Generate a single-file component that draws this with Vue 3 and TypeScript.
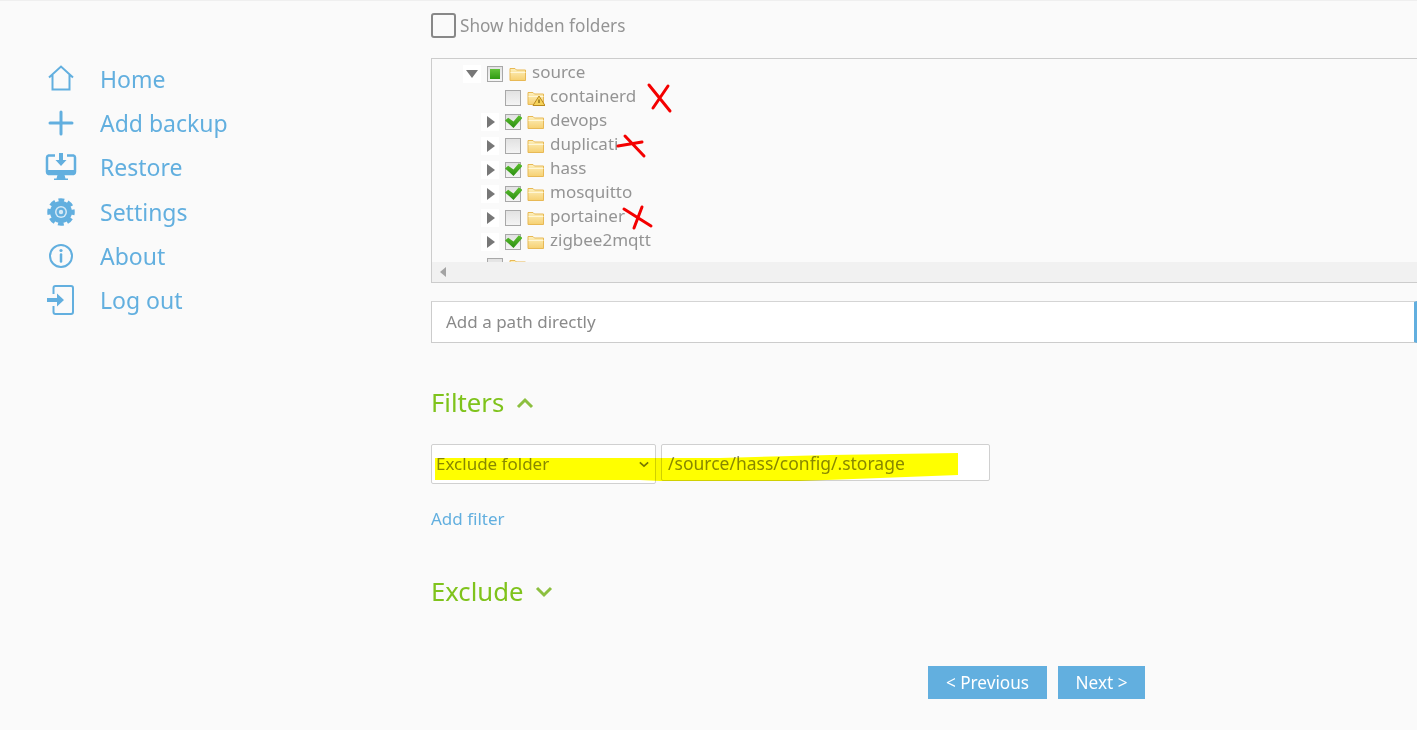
<script setup lang="ts">
interface TreeRow {
  name: string;
  level: 0 | 1;
  state: 'none' | 'checked' | 'partial';
  toggle: 'open' | 'closed' | 'leaf';
  warn?: boolean;
}

const rows: TreeRow[] = [
  { name: 'source', level: 0, state: 'partial', toggle: 'open' },
  { name: 'containerd', level: 1, state: 'none', toggle: 'leaf', warn: true },
  { name: 'devops', level: 1, state: 'checked', toggle: 'closed' },
  { name: 'duplicati', level: 1, state: 'none', toggle: 'closed' },
  { name: 'hass', level: 1, state: 'checked', toggle: 'closed' },
  { name: 'mosquitto', level: 1, state: 'checked', toggle: 'closed' },
  { name: 'portainer', level: 1, state: 'none', toggle: 'closed' },
  { name: 'zigbee2mqtt', level: 1, state: 'checked', toggle: 'closed' },
  { name: '', level: 0, state: 'none', toggle: 'leaf' },
];
</script>

<template>
  <div class="page">
    <svg width="0" height="0" class="defs">
      <defs>
        <linearGradient id="folderFill" x1="0" y1="0" x2="0" y2="1">
          <stop offset="0" stop-color="#fdf0bd" />
          <stop offset="1" stop-color="#f6d071" />
        </linearGradient>
        <linearGradient id="tickFill" x1="0" y1="0" x2="0" y2="1">
          <stop offset="0" stop-color="#5cc02e" />
          <stop offset="1" stop-color="#2c8f12" />
        </linearGradient>
      </defs>
    </svg>

    <nav class="sidebar">
      <a class="nav-item">
        <svg viewBox="0 0 32 32" class="nav-icon">
          <path d="M4 14.5 16 3.5l12 11M7.5 12v14.5h17V12" fill="none" stroke="currentColor" stroke-width="2" />
        </svg>
        Home
      </a>
      <a class="nav-item">
        <svg viewBox="0 0 32 32" class="nav-icon">
          <path d="M16 5v22M5 16h22" fill="none" stroke="currentColor" stroke-width="3" stroke-linecap="round" />
        </svg>
        Add backup
      </a>
      <a class="nav-item">
        <svg viewBox="0 0 32 32" class="nav-icon">
          <path d="M10 4.5H3.5a2 2 0 0 0-1.5 2V21a2 2 0 0 0 1.5 2h25a2 2 0 0 0 1.5-2V6.500a2 2 0 0 0-1.500-2H22" fill="none" stroke="currentColor" stroke-width="2.500" />
          <path d="M2 19h28v3a2 2 0 0 1-2 2H4a2 2 0 0 1-2-2zM12.500 24h7l1 3.500h2.500V29H9v-1.500h2.500zM14 2h4v7h3.500L16 15l-5.500-6H14z" fill="currentColor" />
        </svg>
        Restore
      </a>
      <a class="nav-item">
        <svg viewBox="0 0 32 32" class="nav-icon">
          <circle cx="16" cy="16" r="12" fill="none" stroke="currentColor" stroke-width="3.500" stroke-dasharray="5.800 3.625" stroke-dashoffset="2.900" />
          <circle cx="16" cy="16" r="11" fill="currentColor" />
          <circle cx="16" cy="16" r="6" fill="#d5e9f6" />
          <circle cx="16" cy="16" r="4.500" fill="currentColor" />
          <circle cx="16" cy="16" r="2.200" fill="#d5e9f6" />
        </svg>
        Settings
      </a>
      <a class="nav-item">
        <svg viewBox="0 0 32 32" class="nav-icon">
          <circle cx="16" cy="16" r="11" fill="none" stroke="currentColor" stroke-width="2" />
          <path d="M16 14.500v7" fill="none" stroke="currentColor" stroke-width="2.500" stroke-linecap="round" />
          <circle cx="16" cy="10.500" r="1.600" fill="currentColor" />
        </svg>
        About
      </a>
      <a class="nav-item">
        <svg viewBox="0 0 32 32" class="nav-icon">
          <path d="M8.500 10V4a2 2 0 0 1 2-2H26a2 2 0 0 1 2 2v24a2 2 0 0 1-2 2H10.500a2 2 0 0 1-2-2v-6" fill="none" stroke="currentColor" stroke-width="2" />
          <path d="M2 14h10V9.500l7 6.500-7 6.500V18H2z" fill="currentColor" />
        </svg>
        Log out
      </a>
    </nav>

    <main class="content">
      <label class="hidden-toggle">
        <span class="big-check"></span>
        Show hidden folders
      </label>

      <div class="tree">
        <div class="tree-rows">
          <div v-for="(row, i) in rows" :key="i" class="tree-row" :class="'level-' + row.level">
            <span class="toggle" :class="{ leaf: row.toggle === 'leaf' }">
              <svg v-if="row.toggle === 'open'" viewBox="0 0 12 12" width="12" height="12">
                <path d="M0 2h12L6 10z" fill="#777" />
              </svg>
              <svg v-else-if="row.toggle === 'closed'" viewBox="0 0 12 12" width="12" height="12">
                <path d="M3 0v12l8-6z" fill="#777" />
              </svg>
            </span>
            <span class="check">
              <svg v-if="row.state === 'checked'" viewBox="0 0 16 16" width="17" height="17" class="tick">
                <path d="M0 7 3 4.500 8 8 13 2 16.500 4.500 8 14z" fill="url(#tickFill)" />
              </svg>
              <span v-if="row.state === 'partial'" class="partial"></span>
            </span>
            <span class="folder">
              <svg viewBox="0 0 18 16" width="18" height="16">
                <path d="M1 2.500h5l1.500 1.500H16.500V14.500H1z" fill="url(#folderFill)" stroke="#e8b955" />
                <path d="M1.500 6.500h15" stroke="#fff6d6" />
                <path v-if="row.warn" d="M12 6 18 15.500H6z" fill="#f6d35a" stroke="#b98a20" />
                <path v-if="row.warn" d="M12 9.500v3.500" stroke="#8c6a14" stroke-width="1.400" />
              </svg>
            </span>
            <span class="tree-label">{{ row.name }}</span>
          </div>
        </div>
        <div class="scrollbar">
          <svg viewBox="0 0 6 10" width="6" height="10"><path d="M6 0v10L0 5z" fill="#a3a3a3" /></svg>
        </div>
      </div>

      <div class="path-row">
        <input class="path-input" placeholder="Add a path directly" />
      </div>

      <h2 class="section-title filters-title">
        Filters
        <svg viewBox="0 0 18 12" width="18" height="12" class="chevron">
          <path d="M2 10 9 3l7 7" fill="none" stroke="#8cbf3f" stroke-width="3" />
        </svg>
      </h2>

      <div class="filter-row">
        <div class="select-wrap">
          <select class="filter-select">
            <option>Exclude folder</option>
          </select>
          <svg viewBox="0 0 12 8" width="10" height="7" class="select-arrow">
            <path d="M1 1.500 6 6l5-4.500" fill="none" stroke="#777" stroke-width="2" />
          </svg>
        </div>
        <input class="filter-input" value="/source/hass/config/.storage" />
      </div>

      <a class="add-filter">Add filter</a>

      <h2 class="section-title exclude-title">
        Exclude
        <svg viewBox="0 0 18 12" width="18" height="12" class="chevron">
          <path d="M2 2l7 7 7-7" fill="none" stroke="#8cbf3f" stroke-width="3" />
        </svg>
      </h2>

      <div class="wizard-buttons">
        <button class="wizard-btn prev">&lt; Previous</button>
        <button class="wizard-btn next">Next &gt;</button>
      </div>
    </main>

    <!-- marker scribbles drawn on top of the screenshot -->
    <svg class="scribbles" viewBox="0 0 1417 730" width="1417" height="730">
      <path class="yellow" d="M435 458H640L720 458 830 455 958 453V475L880 478 800 481H660L640 480H435z" />
      <g class="red">
        <path d="M649 85 670 111M668 86 653 108" />
        <path d="M618 146 642 142M625 136 644 156" />
        <path d="M624 209 651 226M642 207 634 228" />
      </g>
    </svg>
  </div>
</template>

<style>
html,
body {
  margin: 0;
  background: #fafafa;
  overflow: hidden;
}
</style>

<style scoped>
.page {
  position: relative;
  display: flex;
  height: 729px;
  border-top: 1px solid #efefef;
  font-family: "Noto Sans", "Open Sans", sans-serif;
  color: #999;
  overflow: hidden;
}

.defs {
  position: absolute;
}

.sidebar {
  flex: 0 0 431px;
  padding: 56px 0 0 45px;
  box-sizing: border-box;
}

.nav-item {
  display: flex;
  align-items: center;
  gap: 23px;
  height: 44.2px;
  font-size: 23px;
  color: #62afdf;
}

.nav-icon {
  width: 32px;
  height: 32px;
  flex: none;
}

.content {
  flex: 1;
  min-width: 0;
  padding-top: 12px;
}

.hidden-toggle {
  display: flex;
  align-items: center;
  gap: 4px;
  height: 25px;
  font-size: 17.2px;
  color: #949494;
}

.big-check {
  width: 25px;
  height: 25px;
  box-sizing: border-box;
  border: 2px solid #888;
  border-radius: 3px;
}

.tree {
  margin: 20px -20px 0 0;
  height: 225px;
  box-sizing: border-box;
  border: 1px solid #ccc;
  display: flex;
  flex-direction: column;
}

.tree-rows {
  flex: 1;
  min-height: 0;
  overflow: hidden;
  padding-top: 1px;
}

.tree-row {
  display: flex;
  align-items: center;
  height: 24px;
  font-size: 17px;
  color: #949494;
}

.level-0 {
  padding-left: 31px;
}

.level-1 {
  padding-left: 49px;
}

.toggle {
  width: 18px;
  height: 18px;
  margin-top: 4px;
  display: flex;
  align-items: center;
  justify-content: center;
  background: #fff;
}

.toggle.leaf {
  background: transparent;
}

.check {
  position: relative;
  width: 16px;
  height: 16px;
  margin: 4px 0 0 6px;
  box-sizing: border-box;
  border: 1px solid #a8a8a8;
  background: linear-gradient(#e2e2e2, #f4f4f4);
  display: flex;
  align-items: center;
  justify-content: center;
}

.tick {
  position: absolute;
  left: -1px;
  top: -2px;
}

.partial {
  width: 10px;
  height: 10px;
  background: linear-gradient(#62c23a, #2f9a12);
}

.folder {
  width: 18px;
  height: 18px;
  margin: 4px 0 0 6px;
  display: flex;
  align-items: center;
}

.tree-label {
  margin: 0 0 2px 5px;
}

.scrollbar {
  flex: none;
  height: 20px;
  background: #f1f1f1;
  display: flex;
  align-items: center;
  padding-left: 8px;
}

.path-row {
  margin-top: 18px;
  display: flex;
}

.path-input {
  flex: 1;
  height: 42px;
  box-sizing: border-box;
  border: 1px solid #ccc;
  border-right: 3px solid #62afdf;
  border-top-color: #d4d4d4;
  background: #fff;
  padding: 0 14px 2px;
  font: 17px "Noto Sans", sans-serif;
  color: #888;
  outline: none;
}

.path-input::placeholder {
  color: #8a8a8a;
  opacity: 1;
}

.section-title {
  margin: 0;
  display: flex;
  align-items: center;
  gap: 12px;
  font-size: 25.7px;
  font-weight: 400;
  line-height: 34px;
  color: #7fc31c;
}

.filters-title {
  margin-top: 43px;
}

.filter-row {
  display: flex;
  align-items: flex-start;
  gap: 5px;
  margin-top: 24px;
}

.select-wrap {
  position: relative;
}

.filter-select {
  display: block;
  width: 225px;
  height: 40px;
  box-sizing: border-box;
  appearance: none;
  border: 1px solid #d0d0d0;
  border-radius: 2px;
  background: #fff;
  padding: 0 0 2px 4px;
  font: 17px "Noto Sans", sans-serif;
  color: #888;
}

.select-arrow {
  position: absolute;
  right: 7px;
  top: 17px;
}

.filter-input {
  width: 329px;
  height: 37px;
  box-sizing: border-box;
  border: 1px solid #d0d0d0;
  border-radius: 2px;
  background: #fff;
  padding: 0 6px;
  font: 17.5px "Noto Sans", sans-serif;
  color: #888;
  outline: none;
}

.add-filter {
  display: block;
  margin-top: 24px;
  font-size: 17px;
  line-height: 22px;
  color: #62afdf;
}

.exclude-title {
  margin-top: 45px;
}

.wizard-buttons {
  display: flex;
  justify-content: flex-end;
  gap: 11px;
  width: 714px;
  margin-top: 57px;
}

.wizard-btn {
  height: 33px;
  border: 0;
  background: #62afdf;
  color: #fff;
  font: 17.2px "Noto Sans", sans-serif;
  padding: 0;
}

.prev {
  width: 119px;
}

.next {
  width: 87px;
}

.scribbles {
  position: absolute;
  left: 0;
  top: -1px;
  pointer-events: none;
}

.yellow {
  fill: #ffff00;
  mix-blend-mode: multiply;
}

.red {
  fill: none;
  stroke: #f40000;
  stroke-width: 3;
  stroke-linecap: round;
}
</style>
